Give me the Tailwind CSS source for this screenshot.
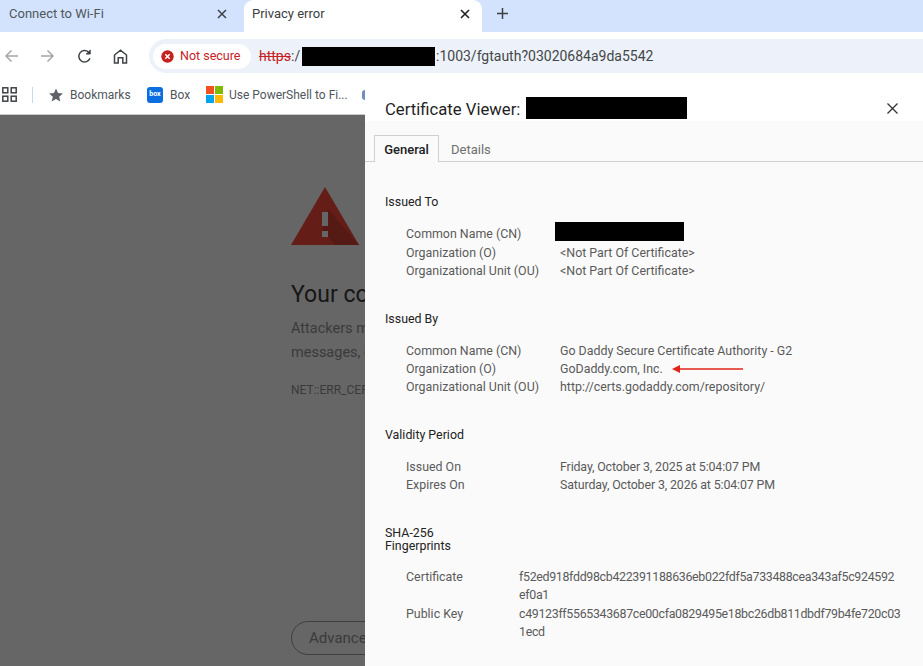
<!DOCTYPE html>
<html lang="en">
<head>
<meta charset="UTF-8" />
<title>Privacy error</title>
<script src="https://cdn.jsdelivr.net/npm/@tailwindcss/browser@4"></script>
</head>
<body class="m-0 bg-white font-['Roboto',sans-serif] text-[#3c4043]">
<div class="relative w-[923px] h-[666px] overflow-hidden flex flex-col">

  <!-- tab strip -->
  <div class="h-[32px] shrink-0 bg-[#d3e3fd] flex items-center">
    <div class="w-[244px] h-full flex items-center pl-[9px] pr-[17px] pb-[5px] justify-between text-[13px] text-[#50565c]">
      <span>Connect to Wi-Fi</span>
      <svg width="10" height="10" viewBox="0 0 10 10" stroke="#3c4043" stroke-width="1.5"><path d="M1 1l8 8M9 1l-8 8"/></svg>
    </div>
    <div class="w-[238px] h-full bg-white rounded-t-[9px] flex items-center pl-[8px] pr-[12px] pb-[5px] justify-between text-[13px] text-[#3c4043]">
      <span>Privacy error</span>
      <svg width="10" height="10" viewBox="0 0 10 10" stroke="#202124" stroke-width="1.6"><path d="M1 1l8 8M9 1l-8 8"/></svg>
    </div>
    <svg class="ml-[15px] mb-[5px]" width="11" height="11" viewBox="0 0 11 11" stroke="#3c4043" stroke-width="1.5"><path d="M5.5 0v11M0 5.5h11"/></svg>
  </div>

  <!-- toolbar -->
  <div class="h-[43px] shrink-0 bg-white flex items-center pt-[5px]">
    <div class="w-[149px] flex items-center shrink-0">
      <svg class="ml-[4px]" width="15" height="14" viewBox="0 0 15 14" fill="none" stroke="#a4a7ab" stroke-width="1.5"><path d="M14 7H2M7.5 1.5L2 7l5.5 5.5"/></svg>
      <svg class="ml-[21px]" width="15" height="14" viewBox="0 0 15 14" fill="none" stroke="#a4a7ab" stroke-width="1.5"><path d="M1 7h12M7.500 1.500L13 7l-5.500 5.500"/></svg>
      <svg class="ml-[22px]" width="15" height="15" viewBox="0 0 15 15" fill="none" stroke="#3f4347" stroke-width="1.5"><path d="M12.900 9.200A5.700 5.700 0 1 1 11.600 3.300"/><path d="M13.200 0.800v4.200H9" fill="#3f4347" stroke-width="1"/></svg>
      <svg class="ml-[21px]" width="15" height="15" viewBox="0 0 15 15" fill="none" stroke="#3f4347" stroke-width="1.5"><path d="M1.500 14V6l6-4.800 6 4.800v8h-3.700V8.800H5.200V14z"/></svg>
    </div>
    <div class="flex-1 h-[34px] bg-[#edf2fa] rounded-l-full flex items-center pl-[4px]">
      <div class="h-[25px] w-[98px] bg-white rounded-full flex items-center pl-[8px] gap-[6px] text-[12.500px] text-[#c5221f]">
        <svg width="13" height="13" viewBox="0 0 13 13"><circle cx="6.500" cy="6.500" r="6.200" fill="#c5221f"/><path d="M4.300 4.300l4.400 4.400M8.700 4.300l-4.400 4.400" stroke="#fff" stroke-width="1.500"/></svg>
        <span>Not secure</span>
      </div>
      <div class="ml-[8px] flex items-center text-[14px] text-[#444746]">
        <span class="w-[32px] text-[#c5221f] line-through">https</span><span class="w-[11px]">:/</span>
        <span class="w-[133px] h-[19px] bg-black inline-block"></span>
        <span class="ml-[1px]">:1003/fgtauth?03020684a9da5542</span>
      </div>
    </div>
  </div>

  <!-- bookmarks bar -->
  <div class="h-[40px] shrink-0 bg-white border-b border-[#c9cacc] flex items-center text-[12px] text-[#50565c]">
    <svg class="ml-[2px]" width="15" height="15" viewBox="0 0 15 15" fill="none" stroke="#3f4347" stroke-width="1.500"><rect x="0.800" y="0.800" width="5" height="5"/><rect x="9.200" y="0.800" width="5" height="5"/><rect x="0.800" y="9.200" width="5" height="5"/><rect x="9.200" y="9.200" width="5" height="5"/></svg>
    <span class="ml-[15px] w-px h-[16px] bg-[#c7d9f5]"></span>
    <svg class="ml-[16px]" width="14" height="14" viewBox="0 0 14 14" fill="#5f6368"><path d="M7 .5l2 4.500 4.900.5-3.700 3.200 1.100 4.800L7 11l-4.300 2.500 1.100-4.800L.1 5.500 5 5z"/></svg>
    <span class="ml-[7px] w-[60px]">Bookmarks</span>
    <span class="ml-[17px] w-[16px] h-[16px] bg-[#0b6ee0] rounded-[3px] flex items-center justify-center text-[7px] font-bold text-white">box</span>
    <span class="ml-[7px] w-[19px]">Box</span>
    <svg class="ml-[17px]" width="17" height="17" viewBox="0 0 17 17"><rect width="8" height="8" fill="#f25022"/><rect x="9" width="8" height="8" fill="#7fba00"/><rect y="9" width="8" height="8" fill="#00a4ef"/><rect x="9" y="9" width="8" height="8" fill="#ffb900"/></svg>
    <span class="ml-[6px] w-[118px] whitespace-nowrap">Use PowerShell to Fi...</span>
    <span class="ml-[15px] w-[3px] h-[10px] bg-[#6f8fc0] rounded-l-full"></span>
  </div>

  <!-- dimmed page -->
  <div class="flex-1 bg-[#666666] pl-[291px] overflow-hidden text-[#3a3a3a] whitespace-nowrap">
    <svg class="mt-[72px]" width="68" height="58" viewBox="0 0 68 58"><path d="M34 0l34 58H0z" fill="#641d17"/><path d="M37 22l31 36H44L31 44z" fill="#561a14"/><rect x="31" y="25" width="6" height="14" fill="#666"/><rect x="31" y="44" width="6" height="6" fill="#666"/></svg>
    <div class="mt-[35px] text-[23px] leading-[30px] text-[#161616]">Your connection is not private</div>
    <div class="mt-[7px] text-[14.500px] leading-[24px]">Attackers might be trying to steal your information<br>messages, or credit cards</div>
    <div class="mt-[16px] text-[12px]">NET::ERR_CERT_AUTHORITY_INVALID</div>
    <div class="mt-[222px] inline-block border border-[#3f3f3f] rounded-full h-[34px] pl-[17px] pr-[20px] text-[15px] leading-[32px]">Advanced</div>
  </div>

  <!-- certificate viewer dialog -->
  <div class="absolute left-[365px] top-[77px] w-[558px] bottom-0 bg-[#fafafa] flex flex-col">
    <div class="h-[44px] shrink-0 bg-white flex items-center pl-[20px] text-[16.700px] text-[#1f1f1f] pt-[21px]">
      <span class="w-[136px] whitespace-nowrap">Certificate Viewer:</span>
      <span class="ml-[5px] mt-[-3px] w-[161px] h-[22px] bg-black"></span>
      <svg class="ml-[200px] mt-[-3px]" width="11" height="11" viewBox="0 0 11 11" stroke="#333" stroke-width="1.300"><path d="M.5.500l10 10M10.500.500l-10 10"/></svg>
    </div>
    <div class="mt-[14px] h-[27px] shrink-0 flex border-b border-[#cfcfcf] pl-[9px] text-[13px]">
      <div class="w-[65px] h-[27px] border border-b-0 border-[#cfcfcf] bg-[#fafafa] flex items-center justify-center pt-[1px] font-medium text-[#202124]">General</div>
      <div class="ml-[12px] h-[26px] flex items-center pt-[4px] text-[#6e6e6e]">Details</div>
    </div>

    <div class="pl-[20px] text-[12.400px] leading-[18.250px] text-[#5a5a5a] whitespace-nowrap">
      <div class="mt-[31px] text-[#222]">Issued To</div>
      <div class="mt-[14px] pl-[21px] grid grid-cols-[154px_1fr]">
        <div>Common Name (CN)</div><div><span class="block -ml-[5px] mt-[-3px] w-[129px] h-[19px] bg-black"></span></div>
        <div>Organization (O)</div><div>&lt;Not Part Of Certificate&gt;</div>
        <div>Organizational Unit (OU)</div><div>&lt;Not Part Of Certificate&gt;</div>
      </div>

      <div class="mt-[30px] text-[#222]">Issued By</div>
      <div class="mt-[14px] pl-[21px] grid grid-cols-[154px_1fr] leading-[18px]">
        <div>Common Name (CN)</div><div>Go Daddy Secure Certificate Authority - G2</div>
        <div>Organization (O)</div><div class="relative">GoDaddy.com, Inc.
          <svg class="absolute left-[112px] top-[4px]" width="71" height="10" viewBox="0 0 71 10"><path d="M6 5h65" stroke="#e2231a" stroke-width="1.500"/><path d="M0 5l8-4v8z" fill="#e2231a"/></svg>
        </div>
        <div>Organizational Unit (OU)</div><div>http://certs.godaddy.com/repository/</div>
      </div>

      <div class="mt-[30px] text-[#222]">Validity Period</div>
      <div class="mt-[13px] pl-[21px] grid grid-cols-[154px_1fr]">
        <div>Issued On</div><div class="tracking-[-0.13px]">Friday, October 3, 2025 at 5:04:07 PM</div>
        <div>Expires On</div><div class="tracking-[-0.13px]">Saturday, October 3, 2026 at 5:04:07 PM</div>
      </div>

      <div class="mt-[33px] text-[#222] leading-[12.500px]">SHA-256<br>Fingerprints</div>
      <div class="mt-[16px] pl-[21px] grid grid-cols-[113px_1fr]">
        <div>Certificate</div><div class="tracking-[-0.32px]">f52ed918fdd98cb422391188636eb022fdf5a733488cea343af5c924592<br>ef0a1</div>
        <div>Public Key</div><div class="tracking-[-0.32px]">c49123ff5565343687ce00cfa0829495e18bc26db811dbdf79b4fe720c03<br>1ecd</div>
      </div>
    </div>
  </div>
</div>
</body>
</html>
